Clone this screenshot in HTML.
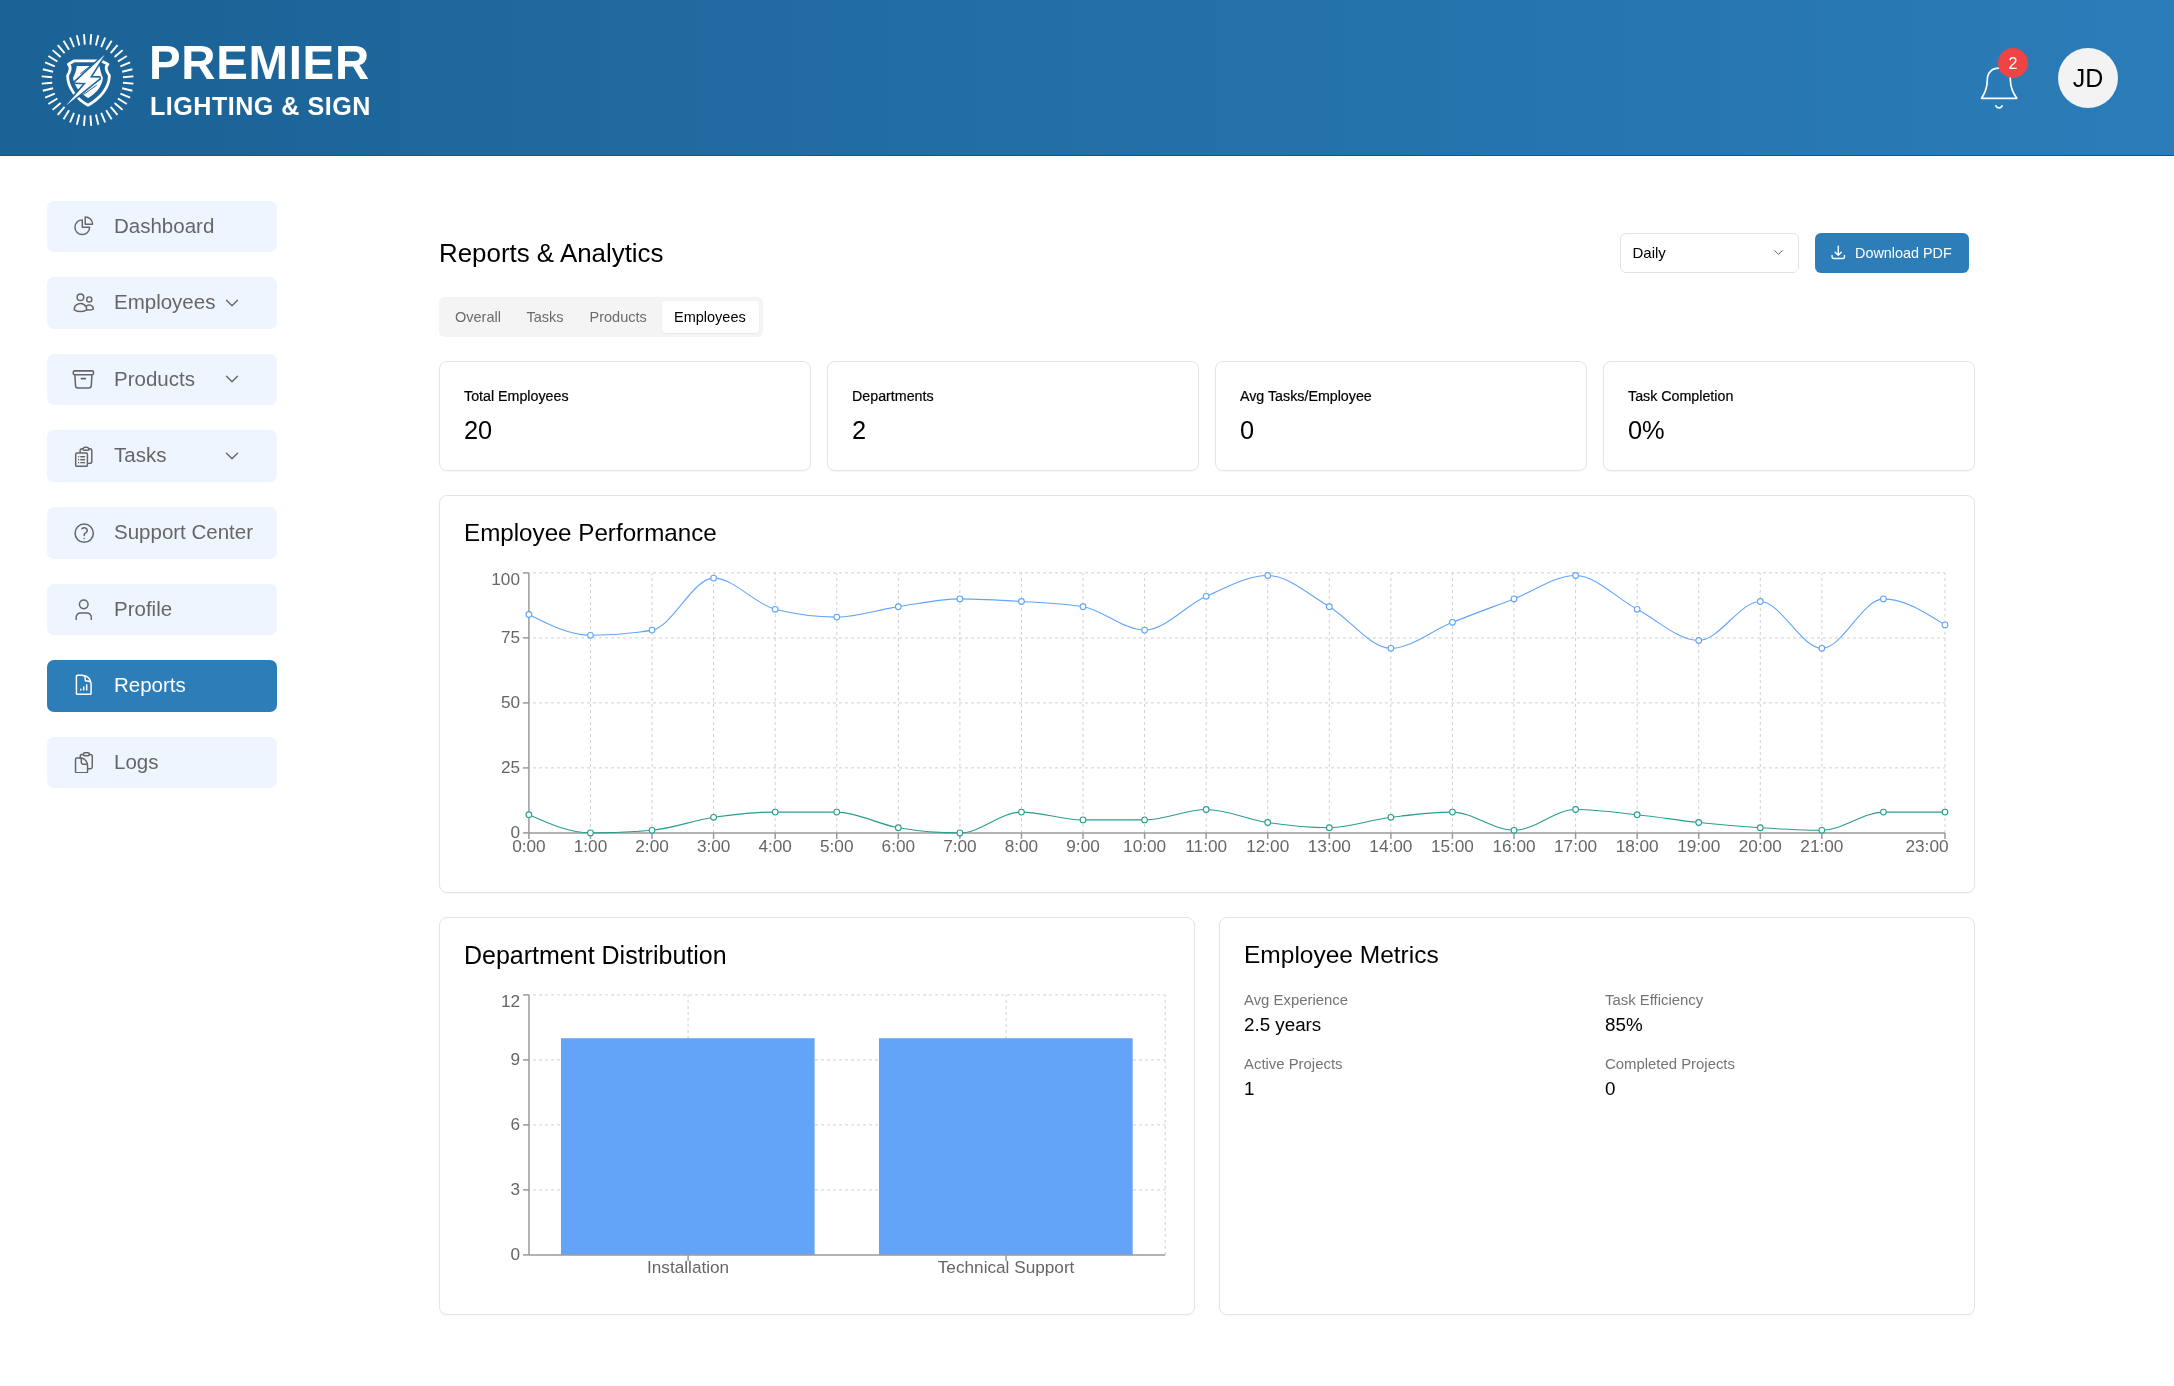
<!DOCTYPE html>
<html><head><meta charset="utf-8"><title>Reports</title>
<style>
*{box-sizing:border-box;margin:0;padding:0}
html,body{width:2174px;height:1386px;overflow:hidden;background:#fff;font-family:"Liberation Sans", sans-serif;color:#000}
.hdr{position:absolute;left:0;top:0;width:2174px;height:156px;background:linear-gradient(90deg,#1b6295 0%,#2b7cb8 100%);border-bottom:1px solid #11578f}
.logo{position:absolute;left:0;top:0;width:2174px;height:156px}
.brand1{position:absolute;left:149px;top:38px;font-weight:bold;font-size:47.4px;line-height:50px;color:#fff;letter-spacing:0.7px;white-space:nowrap}
.brand2{position:absolute;left:150px;top:91.5px;font-weight:bold;font-size:25.1px;line-height:28px;color:#fff;letter-spacing:0.5px;white-space:nowrap}
.avatar{position:absolute;left:2058px;top:48px;width:60px;height:60px;border-radius:50%;background:#f3f3f3;color:#000;font-size:25px;line-height:60px;text-align:center}
.badge{position:absolute;left:1998px;top:47.8px;width:30px;height:30px;border-radius:50%;background:#ef4444;color:#fff;font-size:16px;line-height:32px;text-align:center}
.nav{position:absolute;left:47px;width:230px;height:51.5px;border-radius:7px;background:#eef5fe;color:#666}
.nav.active{background:#2c7db8;color:#fff}
.nico{position:absolute;left:25px;top:13px;width:23.5px;height:23.5px}
.nlab{position:absolute;left:67px;top:-1px;line-height:51.5px;font-size:20.5px;white-space:nowrap}
.nchev{position:absolute;left:173.6px;top:14.5px;width:22px;height:22px}
.title{position:absolute;left:439px;top:237.3px;font-size:25.9px;line-height:32px;white-space:nowrap}
.select{position:absolute;left:1619.5px;top:233px;width:179px;height:40px;border:1px solid #e3e3e3;border-radius:6px;background:#fff}
.select span{position:absolute;left:12px;top:0;line-height:38px;font-size:15px}
.select svg{position:absolute;left:150px;top:11px;width:15px;height:15px;color:#666}
.dl{position:absolute;left:1815px;top:233px;width:154px;height:40px;border-radius:6px;background:#2c7db8;color:#fff}
.dl span{position:absolute;left:40px;top:0;line-height:40px;font-size:14.4px;white-space:nowrap}
.dl svg{position:absolute;left:15px;top:11px;width:16.5px;height:16.5px}
.tabs{position:absolute;left:439px;top:297px;width:323.5px;height:40px;border-radius:6px;background:#f4f4f4}
.tab{position:absolute;top:0;line-height:40px;font-size:14.5px;color:#6b6b6b;white-space:nowrap}
.tabact{position:absolute;left:223px;top:4px;width:97px;height:32px;border-radius:4px;background:#fff;box-shadow:0 1px 2px rgba(0,0,0,0.06)}
.card{position:absolute;border:1px solid #e4e4e4;border-radius:8px;background:#fff;box-shadow:0 1px 2px rgba(0,0,0,0.04)}
.stat{top:361px;width:372px;height:110px}
.slab{position:absolute;left:24px;top:24px;font-size:14.25px;-webkit-text-stroke:0.2px #000;line-height:20px;white-space:nowrap}
.sval{position:absolute;left:24px;top:52px;font-size:25.4px;line-height:32px;white-space:nowrap}
.h2{position:absolute;left:24px;top:21px;font-size:24.2px;line-height:32px;white-space:nowrap}
.ml{position:absolute;font-size:14.9px;line-height:20px;color:#747474;white-space:nowrap}
.mv{position:absolute;font-size:18.8px;line-height:26px;color:#000;white-space:nowrap}
.root{position:absolute;left:0;top:0;width:2174px;height:1386px;will-change:transform}
svg.chart{position:absolute;left:0;top:0;width:2174px;height:1386px;overflow:visible}
.tk{font-family:"Liberation Sans", sans-serif;font-size:17.2px;fill:#666}
</style></head><body>
<div class="root">
<div class="hdr"></div>
<svg class="logo" viewBox="0 0 2174 156">
<line x1="90.39" y1="44.61" x2="91.21" y2="34.14" stroke="#fff" stroke-width="1.9"/>
<line x1="95.89" y1="45.48" x2="98.34" y2="35.27" stroke="#fff" stroke-width="1.9"/>
<line x1="101.19" y1="47.20" x2="105.20" y2="37.50" stroke="#fff" stroke-width="1.9"/>
<line x1="106.15" y1="49.73" x2="111.63" y2="40.78" stroke="#fff" stroke-width="1.9"/>
<line x1="110.66" y1="53.01" x2="117.47" y2="45.02" stroke="#fff" stroke-width="1.9"/>
<line x1="114.59" y1="56.94" x2="122.58" y2="50.13" stroke="#fff" stroke-width="1.9"/>
<line x1="117.87" y1="61.45" x2="126.82" y2="55.97" stroke="#fff" stroke-width="1.9"/>
<line x1="120.40" y1="66.41" x2="130.10" y2="62.40" stroke="#fff" stroke-width="1.9"/>
<line x1="122.12" y1="71.71" x2="132.33" y2="69.26" stroke="#fff" stroke-width="1.9"/>
<line x1="122.99" y1="77.21" x2="133.46" y2="76.39" stroke="#fff" stroke-width="1.9"/>
<line x1="122.99" y1="82.79" x2="133.46" y2="83.61" stroke="#fff" stroke-width="1.9"/>
<line x1="122.12" y1="88.29" x2="132.33" y2="90.74" stroke="#fff" stroke-width="1.9"/>
<line x1="120.40" y1="93.59" x2="130.10" y2="97.60" stroke="#fff" stroke-width="1.9"/>
<line x1="117.87" y1="98.55" x2="126.82" y2="104.03" stroke="#fff" stroke-width="1.9"/>
<line x1="114.59" y1="103.06" x2="122.58" y2="109.87" stroke="#fff" stroke-width="1.9"/>
<line x1="110.66" y1="106.99" x2="117.47" y2="114.98" stroke="#fff" stroke-width="1.9"/>
<line x1="106.15" y1="110.27" x2="111.63" y2="119.22" stroke="#fff" stroke-width="1.9"/>
<line x1="101.19" y1="112.80" x2="105.20" y2="122.50" stroke="#fff" stroke-width="1.9"/>
<line x1="95.89" y1="114.52" x2="98.34" y2="124.73" stroke="#fff" stroke-width="1.9"/>
<line x1="90.39" y1="115.39" x2="91.21" y2="125.86" stroke="#fff" stroke-width="1.9"/>
<line x1="84.81" y1="115.39" x2="83.99" y2="125.86" stroke="#fff" stroke-width="1.9"/>
<line x1="79.31" y1="114.52" x2="76.86" y2="124.73" stroke="#fff" stroke-width="1.9"/>
<line x1="74.01" y1="112.80" x2="70.00" y2="122.50" stroke="#fff" stroke-width="1.9"/>
<line x1="69.05" y1="110.27" x2="63.57" y2="119.22" stroke="#fff" stroke-width="1.9"/>
<line x1="64.54" y1="106.99" x2="57.73" y2="114.98" stroke="#fff" stroke-width="1.9"/>
<line x1="60.61" y1="103.06" x2="52.62" y2="109.87" stroke="#fff" stroke-width="1.9"/>
<line x1="57.33" y1="98.55" x2="48.38" y2="104.03" stroke="#fff" stroke-width="1.9"/>
<line x1="54.80" y1="93.59" x2="45.10" y2="97.60" stroke="#fff" stroke-width="1.9"/>
<line x1="53.08" y1="88.29" x2="42.87" y2="90.74" stroke="#fff" stroke-width="1.9"/>
<line x1="52.21" y1="82.79" x2="41.74" y2="83.61" stroke="#fff" stroke-width="1.9"/>
<line x1="52.21" y1="77.21" x2="41.74" y2="76.39" stroke="#fff" stroke-width="1.9"/>
<line x1="53.08" y1="71.71" x2="42.87" y2="69.26" stroke="#fff" stroke-width="1.9"/>
<line x1="54.80" y1="66.41" x2="45.10" y2="62.40" stroke="#fff" stroke-width="1.9"/>
<line x1="57.33" y1="61.45" x2="48.38" y2="55.97" stroke="#fff" stroke-width="1.9"/>
<line x1="60.61" y1="56.94" x2="52.62" y2="50.13" stroke="#fff" stroke-width="1.9"/>
<line x1="64.54" y1="53.01" x2="57.73" y2="45.02" stroke="#fff" stroke-width="1.9"/>
<line x1="69.05" y1="49.73" x2="63.57" y2="40.78" stroke="#fff" stroke-width="1.9"/>
<line x1="74.01" y1="47.20" x2="70.00" y2="37.50" stroke="#fff" stroke-width="1.9"/>
<line x1="79.31" y1="45.48" x2="76.86" y2="35.27" stroke="#fff" stroke-width="1.9"/>
<line x1="84.81" y1="44.61" x2="83.99" y2="34.14" stroke="#fff" stroke-width="1.9"/>
<g transform="translate(87.6,80)">
<path d="M-13.3,-19.2 H13.5 L20.3,-15.7 Q16.3,-12.5 21.8,-4.4 C21.8,8 12,19 0.5,25.2 C-11,19 -20,8 -20,-4.4 Q-15.3,-12.5 -19.2,-15.7 Z" fill="none" stroke="#fff" stroke-width="2.8" stroke-linejoin="round"/>
<path d="M-10.7,-14 H11.8 C13,-9 14,-5 15.3,-2.3 C15,6 8,14 0.5,18 C-7,14 -13.5,6 -14.6,-2.3 C-13,-5 -11.5,-9 -10.7,-14 Z" fill="#fff"/>
<path d="M-7.3,-6.2 L2.7,-14 M-4.2,14.6 L9.2,5.1" stroke="#1f64a0" stroke-width="1"/>
<path d="M17,-25.2 L-12.9,2.5 L-1.6,2.9 L-21.5,25.6 L12.7,-2.3 L2.3,-2.5 Z" fill="#1f64a0" stroke="#1f64a0" stroke-width="3.2" stroke-linejoin="miter" stroke-miterlimit="2"/>
<path d="M17,-25.2 L-12.9,2.5 L-1.6,2.9 L-21.5,25.6 L12.7,-2.3 L2.3,-2.5 Z" fill="#fff"/>
</g>
</svg>
<div class="brand1">PREMIER</div>
<div class="brand2">LIGHTING &amp; SIGN</div>
<svg style="position:absolute;left:1976px;top:62px;width:46px;height:50px" viewBox="0 0 46 50" fill="none" stroke="#fff" stroke-width="1.7">
<path d="M5.6,36.3 C9,31 11.3,25 11.3,18 C11.3,10.5 16,6.2 23,6.2 C30,6.2 34.4,10.5 34.4,18 C34.4,25 37,31 40.8,36.3 Z" stroke-linejoin="round"/>
<path d="M19.9,43.8 C21.4,46.6 24.6,46.6 26.1,43.8" stroke-linecap="round"/>
</svg>
<div class="badge">2</div>
<div class="avatar">JD</div>

<div class="nav" style="top:200.8px"><svg class="nico" style="margin-top:0px;width:23.5px;height:23.5px;margin-left:0.00px" viewBox="0 0 24 24" fill="none" stroke="currentColor" stroke-width="1.5" stroke-linecap="round" stroke-linejoin="round"><path d="M10.5 6a7.5 7.5 0 1 0 7.5 7.5h-7.5V6Z"/><path d="M13.5 10.5H21A7.5 7.5 0 0 0 13.5 3v7.5Z"/></svg><span class="nlab">Dashboard</span></div>
<div class="nav" style="top:277.4px"><svg class="nico" style="margin-top:0.6px;width:23.5px;height:23.5px;margin-left:0.00px" viewBox="0 0 24 24" fill="none" stroke="currentColor" stroke-width="1.5" stroke-linecap="round" stroke-linejoin="round"><path d="M15 19.128a9.38 9.38 0 0 0 2.625.372 9.337 9.337 0 0 0 4.121-.952 4.125 4.125 0 0 0-7.533-2.493M15 19.128v-.003c0-1.113-.285-2.16-.786-3.07M15 19.128v.106A12.318 12.318 0 0 1 8.624 21c-2.331 0-4.512-.645-6.374-1.766l-.001-.109a6.375 6.375 0 0 1 11.964-3.07M12 6.375a3.375 3.375 0 1 1-6.75 0 3.375 3.375 0 0 1 6.75 0Zm8.25 2.25a2.625 2.625 0 1 1-5.25 0 2.625 2.625 0 0 1 5.25 0Z"/></svg><span class="nlab">Employees</span><svg class="nchev" viewBox="0 0 24 24" fill="none" stroke="currentColor" stroke-width="1.5" stroke-linecap="round" stroke-linejoin="round"><path d="m6 9 6 6 6-6"/></svg></div>
<div class="nav" style="top:353.9px"><svg class="nico" style="margin-top:0.1px;width:24.8px;height:24.8px;margin-left:-0.65px" viewBox="0 0 24 24" fill="none" stroke="currentColor" stroke-width="1.5" stroke-linecap="round" stroke-linejoin="round"><path d="m20.25 7.5-.625 10.632a2.25 2.25 0 0 1-2.247 2.118H6.622a2.25 2.25 0 0 1-2.247-2.118L3.75 7.5M10 11.25h4M3.375 7.5h17.25c.621 0 1.125-.504 1.125-1.125v-1.5c0-.621-.504-1.125-1.125-1.125H3.375c-.621 0-1.125.504-1.125 1.125v1.5c0 .621.504 1.125 1.125 1.125Z"/></svg><span class="nlab">Products</span><svg class="nchev" viewBox="0 0 24 24" fill="none" stroke="currentColor" stroke-width="1.5" stroke-linecap="round" stroke-linejoin="round"><path d="m6 9 6 6 6-6"/></svg></div>
<div class="nav" style="top:430.4px"><svg class="nico" style="margin-top:1.5px;width:23.5px;height:23.5px;margin-left:0.00px" viewBox="0 0 24 24" fill="none" stroke="currentColor" stroke-width="1.5" stroke-linecap="round" stroke-linejoin="round"><path d="M9 12h3.75M9 15h3.75M9 18h3.75m3 .75H18a2.25 2.25 0 0 0 2.25-2.25V6.108c0-1.135-.845-2.098-1.976-2.192a48.424 48.424 0 0 0-1.123-.08m-5.801 0c-.065.21-.1.433-.1.664 0 .414.336.75.75.75h4.5a.75.75 0 0 0 .75-.75 2.25 2.25 0 0 0-.1-.664m-5.8 0A2.251 2.251 0 0 1 13.5 2.25H15c1.012 0 1.867.668 2.15 1.586m-5.8 0c-.376.023-.75.05-1.124.08C9.095 4.01 8.25 4.973 8.25 6.108V8.25m0 0H4.875c-.621 0-1.125.504-1.125 1.125v11.25c0 .621.504 1.125 1.125 1.125h9.75c.621 0 1.125-.504 1.125-1.125V9.375c0-.621-.504-1.125-1.125-1.125H8.25ZM6.75 12h.008v.008H6.75V12Zm0 3h.008v.008H6.75V15Zm0 3h.008v.008H6.75V18Z"/></svg><span class="nlab">Tasks</span><svg class="nchev" viewBox="0 0 24 24" fill="none" stroke="currentColor" stroke-width="1.5" stroke-linecap="round" stroke-linejoin="round"><path d="m6 9 6 6 6-6"/></svg></div>
<div class="nav" style="top:507.0px"><svg class="nico" style="margin-top:0.9px;width:24.4px;height:24.4px;margin-left:-0.45px" viewBox="0 0 24 24" fill="none" stroke="currentColor" stroke-width="1.5" stroke-linecap="round" stroke-linejoin="round"><path d="M9.879 7.519c1.171-1.025 3.071-1.025 4.242 0 1.172 1.025 1.172 2.687 0 3.712-.203.179-.43.326-.67.442-.745.361-1.45.999-1.45 1.827v.75M21 12a9 9 0 1 1-18 0 9 9 0 0 1 18 0Zm-9 5.25h.008v.008H12v-.008Z"/></svg><span class="nlab">Support Center</span></div>
<div class="nav" style="top:583.5px"><svg class="nico" style="margin-top:0px;width:23.5px;height:23.5px;margin-left:0.00px" viewBox="0 0 24 24" fill="none" stroke="currentColor" stroke-width="1.5" stroke-linecap="round" stroke-linejoin="round"><circle cx="12" cy="7.5" r="4.4"/><path d="M19.72 22.9v-2.2a4.41 4.41 0 0 0-4.41-4.41H8.69a4.41 4.41 0 0 0-4.41 4.41v2.2"/></svg><span class="nlab">Profile</span></div>
<div class="nav active" style="top:660.1px"><svg class="nico" style="margin-top:0px;width:23.5px;height:23.5px;margin-left:0.00px" viewBox="0 0 24 24" fill="none" stroke="currentColor" stroke-width="1.5" stroke-linecap="round" stroke-linejoin="round"><path d="M19.5 14.25v-2.625a3.375 3.375 0 0 0-3.375-3.375h-1.5A1.125 1.125 0 0 1 13.5 7.125v-1.5a3.375 3.375 0 0 0-3.375-3.375H8.25M9 16.5v.75m3-3v3M15 12v5.25m-4.5-15H5.625c-.621 0-1.125.504-1.125 1.125v17.25c0 .621.504 1.125 1.125 1.125h12.75c.621 0 1.125-.504 1.125-1.125V11.25a9 9 0 0 0-9-9Z"/></svg><span class="nlab">Reports</span></div>
<div class="nav" style="top:736.7px"><svg class="nico" style="margin-top:0px;width:23.5px;height:23.5px;margin-left:0.00px" viewBox="0 0 24 24" fill="none" stroke="currentColor" stroke-width="1.5" stroke-linecap="round" stroke-linejoin="round"><path d="M9.5 8.25H4.7a1.1 1.1 0 0 0-1.1 1.1V22a1.1 1.1 0 0 0 1.1 1.1h10.1a1.1 1.1 0 0 0 1.1-1.1v-5.7A7 8 0 0 0 9.5 8.25Z"/><path d="M9.5 8.6v4.2a1.8 1.8 0 0 0 1.8 1.8h4"/><path d="M8.4 8.25V6.3a1.8 1.8 0 0 1 1.8-1.8h1.45M17.75 4.5h1.15a1.8 1.8 0 0 1 1.8 1.8v11a1.8 1.8 0 0 1-1.8 1.8h-3"/><rect x="11.65" y="2.7" width="6.1" height="3.2" rx="1.5"/></svg><span class="nlab">Logs</span></div>

<div class="title">Reports &amp; Analytics</div>
<div class="select"><span>Daily</span><svg viewBox="0 0 24 24" fill="none" stroke="currentColor" stroke-width="1.6" stroke-linecap="round" stroke-linejoin="round"><path d="m6 9 6 6 6-6"/></svg></div>
<div class="dl"><svg viewBox="0 0 24 24" fill="none" stroke="currentColor" stroke-width="2" stroke-linecap="round" stroke-linejoin="round"><path d="M3 16.5v2.25A2.25 2.25 0 0 0 5.25 21h13.5A2.25 2.25 0 0 0 21 18.75V16.5M16.5 12 12 16.5m0 0L7.5 12m4.5 4.5V3"/></svg><span>Download PDF</span></div>

<div class="tabs">
<div class="tabact"></div>
<div class="tab" style="left:16px">Overall</div>
<div class="tab" style="left:87.5px">Tasks</div>
<div class="tab" style="left:150.5px">Products</div>
<div class="tab" style="left:235px;color:#000">Employees</div>
</div>

<div class="card stat" style="left:439px"><div class="slab">Total Employees</div><div class="sval">20</div></div>
<div class="card stat" style="left:827px"><div class="slab">Departments</div><div class="sval">2</div></div>
<div class="card stat" style="left:1215px"><div class="slab">Avg Tasks/Employee</div><div class="sval">0</div></div>
<div class="card stat" style="left:1603px"><div class="slab">Task Completion</div><div class="sval">0%</div></div>

<div class="card" style="left:439px;top:495px;width:1536px;height:398px"><div class="h2">Employee Performance</div></div>
<div class="card" style="left:439px;top:917px;width:756px;height:398px"><div class="h2" style="font-size:25px">Department Distribution</div></div>
<div class="card" style="left:1219px;top:917px;width:756px;height:398px"><div class="h2" style="font-size:24.5px">Employee Metrics</div>
<div class="ml" style="left:24px;top:72px">Avg Experience</div>
<div class="mv" style="left:24px;top:94px">2.5 years</div>
<div class="ml" style="left:385px;top:72px">Task Efficiency</div>
<div class="mv" style="left:385px;top:94px">85%</div>
<div class="ml" style="left:24px;top:136px">Active Projects</div>
<div class="mv" style="left:24px;top:158px">1</div>
<div class="ml" style="left:385px;top:136px">Completed Projects</div>
<div class="mv" style="left:385px;top:158px">0</div>
</div>

<svg class="chart" viewBox="0 0 2174 1386">
<line x1="528.9" x2="1945.0" y1="767.90" y2="767.90" stroke="#cfcfcf" stroke-dasharray="3 3" stroke-dashoffset="1.9"/>
<line x1="528.9" x2="1945.0" y1="702.90" y2="702.90" stroke="#cfcfcf" stroke-dasharray="3 3" stroke-dashoffset="1.9"/>
<line x1="528.9" x2="1945.0" y1="637.90" y2="637.90" stroke="#cfcfcf" stroke-dasharray="3 3" stroke-dashoffset="1.9"/>
<line x1="528.9" x2="1945.0" y1="572.90" y2="572.90" stroke="#cfcfcf" stroke-dasharray="3 3" stroke-dashoffset="1.9"/>
<line x1="590.47" x2="590.47" y1="572.9" y2="832.9" stroke="#cfcfcf" stroke-dasharray="3 3" stroke-dashoffset="1"/>
<line x1="652.04" x2="652.04" y1="572.9" y2="832.9" stroke="#cfcfcf" stroke-dasharray="3 3" stroke-dashoffset="1"/>
<line x1="713.61" x2="713.61" y1="572.9" y2="832.9" stroke="#cfcfcf" stroke-dasharray="3 3" stroke-dashoffset="1"/>
<line x1="775.18" x2="775.18" y1="572.9" y2="832.9" stroke="#cfcfcf" stroke-dasharray="3 3" stroke-dashoffset="1"/>
<line x1="836.75" x2="836.75" y1="572.9" y2="832.9" stroke="#cfcfcf" stroke-dasharray="3 3" stroke-dashoffset="1"/>
<line x1="898.32" x2="898.32" y1="572.9" y2="832.9" stroke="#cfcfcf" stroke-dasharray="3 3" stroke-dashoffset="1"/>
<line x1="959.89" x2="959.89" y1="572.9" y2="832.9" stroke="#cfcfcf" stroke-dasharray="3 3" stroke-dashoffset="1"/>
<line x1="1021.46" x2="1021.46" y1="572.9" y2="832.9" stroke="#cfcfcf" stroke-dasharray="3 3" stroke-dashoffset="1"/>
<line x1="1083.03" x2="1083.03" y1="572.9" y2="832.9" stroke="#cfcfcf" stroke-dasharray="3 3" stroke-dashoffset="1"/>
<line x1="1144.60" x2="1144.60" y1="572.9" y2="832.9" stroke="#cfcfcf" stroke-dasharray="3 3" stroke-dashoffset="1"/>
<line x1="1206.17" x2="1206.17" y1="572.9" y2="832.9" stroke="#cfcfcf" stroke-dasharray="3 3" stroke-dashoffset="1"/>
<line x1="1267.73" x2="1267.73" y1="572.9" y2="832.9" stroke="#cfcfcf" stroke-dasharray="3 3" stroke-dashoffset="1"/>
<line x1="1329.30" x2="1329.30" y1="572.9" y2="832.9" stroke="#cfcfcf" stroke-dasharray="3 3" stroke-dashoffset="1"/>
<line x1="1390.87" x2="1390.87" y1="572.9" y2="832.9" stroke="#cfcfcf" stroke-dasharray="3 3" stroke-dashoffset="1"/>
<line x1="1452.44" x2="1452.44" y1="572.9" y2="832.9" stroke="#cfcfcf" stroke-dasharray="3 3" stroke-dashoffset="1"/>
<line x1="1514.01" x2="1514.01" y1="572.9" y2="832.9" stroke="#cfcfcf" stroke-dasharray="3 3" stroke-dashoffset="1"/>
<line x1="1575.58" x2="1575.58" y1="572.9" y2="832.9" stroke="#cfcfcf" stroke-dasharray="3 3" stroke-dashoffset="1"/>
<line x1="1637.15" x2="1637.15" y1="572.9" y2="832.9" stroke="#cfcfcf" stroke-dasharray="3 3" stroke-dashoffset="1"/>
<line x1="1698.72" x2="1698.72" y1="572.9" y2="832.9" stroke="#cfcfcf" stroke-dasharray="3 3" stroke-dashoffset="1"/>
<line x1="1760.29" x2="1760.29" y1="572.9" y2="832.9" stroke="#cfcfcf" stroke-dasharray="3 3" stroke-dashoffset="1"/>
<line x1="1821.86" x2="1821.86" y1="572.9" y2="832.9" stroke="#cfcfcf" stroke-dasharray="3 3" stroke-dashoffset="1"/>
<line x1="1945.00" x2="1945.00" y1="572.9" y2="832.9" stroke="#cfcfcf" stroke-dasharray="3 3" stroke-dashoffset="1"/>
<line x1="528.9" x2="528.9" y1="572.9" y2="832.9" stroke="#9a9a9a" stroke-width="1.5"/>
<line x1="528.9" x2="1945.0" y1="832.9" y2="832.9" stroke="#9a9a9a" stroke-width="1.5"/>
<line x1="522.9" x2="528.9" y1="832.90" y2="832.90" stroke="#9a9a9a" stroke-width="1.5"/>
<text x="520" y="837.80" text-anchor="end" class="tk">0</text>
<line x1="522.9" x2="528.9" y1="767.90" y2="767.90" stroke="#9a9a9a" stroke-width="1.5"/>
<text x="520" y="772.80" text-anchor="end" class="tk">25</text>
<line x1="522.9" x2="528.9" y1="702.90" y2="702.90" stroke="#9a9a9a" stroke-width="1.5"/>
<text x="520" y="707.80" text-anchor="end" class="tk">50</text>
<line x1="522.9" x2="528.9" y1="637.90" y2="637.90" stroke="#9a9a9a" stroke-width="1.5"/>
<text x="520" y="642.80" text-anchor="end" class="tk">75</text>
<line x1="522.9" x2="528.9" y1="572.90" y2="572.90" stroke="#9a9a9a" stroke-width="1.5"/>
<text x="520" y="584.90" text-anchor="end" class="tk">100</text>
<line x1="528.90" x2="528.90" y1="832.9" y2="838.9" stroke="#9a9a9a" stroke-width="1.5"/>
<text x="528.90" y="851.5" text-anchor="middle" class="tk">0:00</text>
<line x1="590.47" x2="590.47" y1="832.9" y2="838.9" stroke="#9a9a9a" stroke-width="1.5"/>
<text x="590.47" y="851.5" text-anchor="middle" class="tk">1:00</text>
<line x1="652.04" x2="652.04" y1="832.9" y2="838.9" stroke="#9a9a9a" stroke-width="1.5"/>
<text x="652.04" y="851.5" text-anchor="middle" class="tk">2:00</text>
<line x1="713.61" x2="713.61" y1="832.9" y2="838.9" stroke="#9a9a9a" stroke-width="1.5"/>
<text x="713.61" y="851.5" text-anchor="middle" class="tk">3:00</text>
<line x1="775.18" x2="775.18" y1="832.9" y2="838.9" stroke="#9a9a9a" stroke-width="1.5"/>
<text x="775.18" y="851.5" text-anchor="middle" class="tk">4:00</text>
<line x1="836.75" x2="836.75" y1="832.9" y2="838.9" stroke="#9a9a9a" stroke-width="1.5"/>
<text x="836.75" y="851.5" text-anchor="middle" class="tk">5:00</text>
<line x1="898.32" x2="898.32" y1="832.9" y2="838.9" stroke="#9a9a9a" stroke-width="1.5"/>
<text x="898.32" y="851.5" text-anchor="middle" class="tk">6:00</text>
<line x1="959.89" x2="959.89" y1="832.9" y2="838.9" stroke="#9a9a9a" stroke-width="1.5"/>
<text x="959.89" y="851.5" text-anchor="middle" class="tk">7:00</text>
<line x1="1021.46" x2="1021.46" y1="832.9" y2="838.9" stroke="#9a9a9a" stroke-width="1.5"/>
<text x="1021.46" y="851.5" text-anchor="middle" class="tk">8:00</text>
<line x1="1083.03" x2="1083.03" y1="832.9" y2="838.9" stroke="#9a9a9a" stroke-width="1.5"/>
<text x="1083.03" y="851.5" text-anchor="middle" class="tk">9:00</text>
<line x1="1144.60" x2="1144.60" y1="832.9" y2="838.9" stroke="#9a9a9a" stroke-width="1.5"/>
<text x="1144.60" y="851.5" text-anchor="middle" class="tk">10:00</text>
<line x1="1206.17" x2="1206.17" y1="832.9" y2="838.9" stroke="#9a9a9a" stroke-width="1.5"/>
<text x="1206.17" y="851.5" text-anchor="middle" class="tk">11:00</text>
<line x1="1267.73" x2="1267.73" y1="832.9" y2="838.9" stroke="#9a9a9a" stroke-width="1.5"/>
<text x="1267.73" y="851.5" text-anchor="middle" class="tk">12:00</text>
<line x1="1329.30" x2="1329.30" y1="832.9" y2="838.9" stroke="#9a9a9a" stroke-width="1.5"/>
<text x="1329.30" y="851.5" text-anchor="middle" class="tk">13:00</text>
<line x1="1390.87" x2="1390.87" y1="832.9" y2="838.9" stroke="#9a9a9a" stroke-width="1.5"/>
<text x="1390.87" y="851.5" text-anchor="middle" class="tk">14:00</text>
<line x1="1452.44" x2="1452.44" y1="832.9" y2="838.9" stroke="#9a9a9a" stroke-width="1.5"/>
<text x="1452.44" y="851.5" text-anchor="middle" class="tk">15:00</text>
<line x1="1514.01" x2="1514.01" y1="832.9" y2="838.9" stroke="#9a9a9a" stroke-width="1.5"/>
<text x="1514.01" y="851.5" text-anchor="middle" class="tk">16:00</text>
<line x1="1575.58" x2="1575.58" y1="832.9" y2="838.9" stroke="#9a9a9a" stroke-width="1.5"/>
<text x="1575.58" y="851.5" text-anchor="middle" class="tk">17:00</text>
<line x1="1637.15" x2="1637.15" y1="832.9" y2="838.9" stroke="#9a9a9a" stroke-width="1.5"/>
<text x="1637.15" y="851.5" text-anchor="middle" class="tk">18:00</text>
<line x1="1698.72" x2="1698.72" y1="832.9" y2="838.9" stroke="#9a9a9a" stroke-width="1.5"/>
<text x="1698.72" y="851.5" text-anchor="middle" class="tk">19:00</text>
<line x1="1760.29" x2="1760.29" y1="832.9" y2="838.9" stroke="#9a9a9a" stroke-width="1.5"/>
<text x="1760.29" y="851.5" text-anchor="middle" class="tk">20:00</text>
<line x1="1821.86" x2="1821.86" y1="832.9" y2="838.9" stroke="#9a9a9a" stroke-width="1.5"/>
<text x="1821.86" y="851.5" text-anchor="middle" class="tk">21:00</text>
<line x1="1945.00" x2="1945.00" y1="832.9" y2="838.9" stroke="#9a9a9a" stroke-width="1.5"/>
<text x="1948.5" y="851.5" text-anchor="end" class="tk">23:00</text>
<path d="M528.90,614.50C549.42,624.90,569.95,635.30,590.47,635.30C610.99,635.30,631.52,633.57,652.04,630.10C672.56,626.63,693.09,578.10,713.61,578.10C734.13,578.10,754.66,604.10,775.18,609.30C795.70,614.50,816.22,617.10,836.75,617.10C857.27,617.10,877.79,609.73,898.32,606.70C918.84,603.67,939.36,598.90,959.89,598.90C980.41,598.90,1000.93,600.20,1021.46,601.50C1041.98,602.80,1062.50,603.23,1083.03,606.70C1103.55,610.17,1124.07,630.10,1144.60,630.10C1165.12,630.10,1185.64,605.40,1206.17,596.30C1226.69,587.20,1247.21,575.50,1267.73,575.50C1288.26,575.50,1308.78,594.57,1329.30,606.70C1349.83,618.83,1370.35,648.30,1390.87,648.30C1411.40,648.30,1431.92,630.53,1452.44,622.30C1472.97,614.07,1493.49,606.70,1514.01,598.90C1534.54,591.10,1555.06,575.50,1575.58,575.50C1596.11,575.50,1616.63,598.47,1637.15,609.30C1657.68,620.13,1678.20,640.50,1698.72,640.50C1719.24,640.50,1739.77,601.50,1760.29,601.50C1780.81,601.50,1801.34,648.30,1821.86,648.30C1842.38,648.30,1862.91,598.90,1883.43,598.90C1903.95,598.90,1924.48,611.90,1945.00,624.90" fill="none" stroke="#60a5fa" stroke-width="1.1"/>
<circle cx="528.90" cy="614.50" r="2.85" fill="#fff" stroke="#60a5fa" stroke-width="1.1"/>
<circle cx="590.47" cy="635.30" r="2.85" fill="#fff" stroke="#60a5fa" stroke-width="1.1"/>
<circle cx="652.04" cy="630.10" r="2.85" fill="#fff" stroke="#60a5fa" stroke-width="1.1"/>
<circle cx="713.61" cy="578.10" r="2.85" fill="#fff" stroke="#60a5fa" stroke-width="1.1"/>
<circle cx="775.18" cy="609.30" r="2.85" fill="#fff" stroke="#60a5fa" stroke-width="1.1"/>
<circle cx="836.75" cy="617.10" r="2.85" fill="#fff" stroke="#60a5fa" stroke-width="1.1"/>
<circle cx="898.32" cy="606.70" r="2.85" fill="#fff" stroke="#60a5fa" stroke-width="1.1"/>
<circle cx="959.89" cy="598.90" r="2.85" fill="#fff" stroke="#60a5fa" stroke-width="1.1"/>
<circle cx="1021.46" cy="601.50" r="2.85" fill="#fff" stroke="#60a5fa" stroke-width="1.1"/>
<circle cx="1083.03" cy="606.70" r="2.85" fill="#fff" stroke="#60a5fa" stroke-width="1.1"/>
<circle cx="1144.60" cy="630.10" r="2.85" fill="#fff" stroke="#60a5fa" stroke-width="1.1"/>
<circle cx="1206.17" cy="596.30" r="2.85" fill="#fff" stroke="#60a5fa" stroke-width="1.1"/>
<circle cx="1267.73" cy="575.50" r="2.85" fill="#fff" stroke="#60a5fa" stroke-width="1.1"/>
<circle cx="1329.30" cy="606.70" r="2.85" fill="#fff" stroke="#60a5fa" stroke-width="1.1"/>
<circle cx="1390.87" cy="648.30" r="2.85" fill="#fff" stroke="#60a5fa" stroke-width="1.1"/>
<circle cx="1452.44" cy="622.30" r="2.85" fill="#fff" stroke="#60a5fa" stroke-width="1.1"/>
<circle cx="1514.01" cy="598.90" r="2.85" fill="#fff" stroke="#60a5fa" stroke-width="1.1"/>
<circle cx="1575.58" cy="575.50" r="2.85" fill="#fff" stroke="#60a5fa" stroke-width="1.1"/>
<circle cx="1637.15" cy="609.30" r="2.85" fill="#fff" stroke="#60a5fa" stroke-width="1.1"/>
<circle cx="1698.72" cy="640.50" r="2.85" fill="#fff" stroke="#60a5fa" stroke-width="1.1"/>
<circle cx="1760.29" cy="601.50" r="2.85" fill="#fff" stroke="#60a5fa" stroke-width="1.1"/>
<circle cx="1821.86" cy="648.30" r="2.85" fill="#fff" stroke="#60a5fa" stroke-width="1.1"/>
<circle cx="1883.43" cy="598.90" r="2.85" fill="#fff" stroke="#60a5fa" stroke-width="1.1"/>
<circle cx="1945.00" cy="624.90" r="2.85" fill="#fff" stroke="#60a5fa" stroke-width="1.1"/>
<path d="M528.90,814.70C549.42,823.80,569.95,832.90,590.47,832.90C610.99,832.90,631.52,832.03,652.04,830.30C672.56,828.57,693.09,820.33,713.61,817.30C734.13,814.27,754.66,812.10,775.18,812.10C795.70,812.10,816.22,812.10,836.75,812.10C857.27,812.10,877.79,824.23,898.32,827.70C918.84,831.17,939.36,832.90,959.89,832.90C980.41,832.90,1000.93,812.10,1021.46,812.10C1041.98,812.10,1062.50,819.90,1083.03,819.90C1103.55,819.90,1124.07,819.90,1144.60,819.90C1165.12,819.90,1185.64,809.50,1206.17,809.50C1226.69,809.50,1247.21,819.47,1267.73,822.50C1288.26,825.53,1308.78,827.70,1329.30,827.70C1349.83,827.70,1370.35,819.90,1390.87,817.30C1411.40,814.70,1431.92,812.10,1452.44,812.10C1472.97,812.10,1493.49,830.30,1514.01,830.30C1534.54,830.30,1555.06,809.50,1575.58,809.50C1596.11,809.50,1616.63,812.53,1637.15,814.70C1657.68,816.87,1678.20,820.33,1698.72,822.50C1719.24,824.67,1739.77,826.40,1760.29,827.70C1780.81,829.00,1801.34,830.30,1821.86,830.30C1842.38,830.30,1862.91,812.10,1883.43,812.10C1903.95,812.10,1924.48,812.10,1945.00,812.10" fill="none" stroke="#2a9d8f" stroke-width="1.1"/>
<circle cx="528.90" cy="814.70" r="2.85" fill="#fff" stroke="#2a9d8f" stroke-width="1.1"/>
<circle cx="590.47" cy="832.90" r="2.85" fill="#fff" stroke="#2a9d8f" stroke-width="1.1"/>
<circle cx="652.04" cy="830.30" r="2.85" fill="#fff" stroke="#2a9d8f" stroke-width="1.1"/>
<circle cx="713.61" cy="817.30" r="2.85" fill="#fff" stroke="#2a9d8f" stroke-width="1.1"/>
<circle cx="775.18" cy="812.10" r="2.85" fill="#fff" stroke="#2a9d8f" stroke-width="1.1"/>
<circle cx="836.75" cy="812.10" r="2.85" fill="#fff" stroke="#2a9d8f" stroke-width="1.1"/>
<circle cx="898.32" cy="827.70" r="2.85" fill="#fff" stroke="#2a9d8f" stroke-width="1.1"/>
<circle cx="959.89" cy="832.90" r="2.85" fill="#fff" stroke="#2a9d8f" stroke-width="1.1"/>
<circle cx="1021.46" cy="812.10" r="2.85" fill="#fff" stroke="#2a9d8f" stroke-width="1.1"/>
<circle cx="1083.03" cy="819.90" r="2.85" fill="#fff" stroke="#2a9d8f" stroke-width="1.1"/>
<circle cx="1144.60" cy="819.90" r="2.85" fill="#fff" stroke="#2a9d8f" stroke-width="1.1"/>
<circle cx="1206.17" cy="809.50" r="2.85" fill="#fff" stroke="#2a9d8f" stroke-width="1.1"/>
<circle cx="1267.73" cy="822.50" r="2.85" fill="#fff" stroke="#2a9d8f" stroke-width="1.1"/>
<circle cx="1329.30" cy="827.70" r="2.85" fill="#fff" stroke="#2a9d8f" stroke-width="1.1"/>
<circle cx="1390.87" cy="817.30" r="2.85" fill="#fff" stroke="#2a9d8f" stroke-width="1.1"/>
<circle cx="1452.44" cy="812.10" r="2.85" fill="#fff" stroke="#2a9d8f" stroke-width="1.1"/>
<circle cx="1514.01" cy="830.30" r="2.85" fill="#fff" stroke="#2a9d8f" stroke-width="1.1"/>
<circle cx="1575.58" cy="809.50" r="2.85" fill="#fff" stroke="#2a9d8f" stroke-width="1.1"/>
<circle cx="1637.15" cy="814.70" r="2.85" fill="#fff" stroke="#2a9d8f" stroke-width="1.1"/>
<circle cx="1698.72" cy="822.50" r="2.85" fill="#fff" stroke="#2a9d8f" stroke-width="1.1"/>
<circle cx="1760.29" cy="827.70" r="2.85" fill="#fff" stroke="#2a9d8f" stroke-width="1.1"/>
<circle cx="1821.86" cy="830.30" r="2.85" fill="#fff" stroke="#2a9d8f" stroke-width="1.1"/>
<circle cx="1883.43" cy="812.10" r="2.85" fill="#fff" stroke="#2a9d8f" stroke-width="1.1"/>
<circle cx="1945.00" cy="812.10" r="2.85" fill="#fff" stroke="#2a9d8f" stroke-width="1.1"/>
<line x1="529.0" x2="1165.2" y1="1189.90" y2="1189.90" stroke="#cfcfcf" stroke-dasharray="3 3" stroke-dashoffset="1.9"/>
<line x1="529.0" x2="1165.2" y1="1124.90" y2="1124.90" stroke="#cfcfcf" stroke-dasharray="3 3" stroke-dashoffset="1.9"/>
<line x1="529.0" x2="1165.2" y1="1059.90" y2="1059.90" stroke="#cfcfcf" stroke-dasharray="3 3" stroke-dashoffset="1.9"/>
<line x1="529.0" x2="1165.2" y1="994.90" y2="994.90" stroke="#cfcfcf" stroke-dasharray="3 3" stroke-dashoffset="1.9"/>
<line x1="688.1" x2="688.1" y1="994.9" y2="1254.9" stroke="#cfcfcf" stroke-dasharray="3 3" stroke-dashoffset="1"/>
<line x1="1006.1" x2="1006.1" y1="994.9" y2="1254.9" stroke="#cfcfcf" stroke-dasharray="3 3" stroke-dashoffset="1"/>
<line x1="1165.2" x2="1165.2" y1="994.9" y2="1254.9" stroke="#cfcfcf" stroke-dasharray="3 3" stroke-dashoffset="1"/>
<rect x="561.0" y="1038.23" width="253.60" height="216.67" fill="#64a4f8"/>
<rect x="879.0" y="1038.23" width="253.70" height="216.67" fill="#64a4f8"/>
<line x1="529.0" x2="529.0" y1="994.9" y2="1254.9" stroke="#9a9a9a" stroke-width="1.5"/>
<line x1="529.0" x2="1165.2" y1="1254.9" y2="1254.9" stroke="#9a9a9a" stroke-width="1.5"/>
<line x1="523.0" x2="529.0" y1="1254.90" y2="1254.90" stroke="#9a9a9a" stroke-width="1.5"/>
<text x="520" y="1259.80" text-anchor="end" class="tk">0</text>
<line x1="523.0" x2="529.0" y1="1189.90" y2="1189.90" stroke="#9a9a9a" stroke-width="1.5"/>
<text x="520" y="1194.80" text-anchor="end" class="tk">3</text>
<line x1="523.0" x2="529.0" y1="1124.90" y2="1124.90" stroke="#9a9a9a" stroke-width="1.5"/>
<text x="520" y="1129.80" text-anchor="end" class="tk">6</text>
<line x1="523.0" x2="529.0" y1="1059.90" y2="1059.90" stroke="#9a9a9a" stroke-width="1.5"/>
<text x="520" y="1064.80" text-anchor="end" class="tk">9</text>
<line x1="523.0" x2="529.0" y1="994.90" y2="994.90" stroke="#9a9a9a" stroke-width="1.5"/>
<text x="520" y="1006.90" text-anchor="end" class="tk">12</text>
<line x1="688.1" x2="688.1" y1="1254.9" y2="1260.9" stroke="#9a9a9a" stroke-width="1.5"/>
<text x="688.1" y="1273.3" text-anchor="middle" class="tk">Installation</text>
<line x1="1006.1" x2="1006.1" y1="1254.9" y2="1260.9" stroke="#9a9a9a" stroke-width="1.5"/>
<text x="1006.1" y="1273.3" text-anchor="middle" class="tk">Technical Support</text>
</svg>
</div>
</body></html>
